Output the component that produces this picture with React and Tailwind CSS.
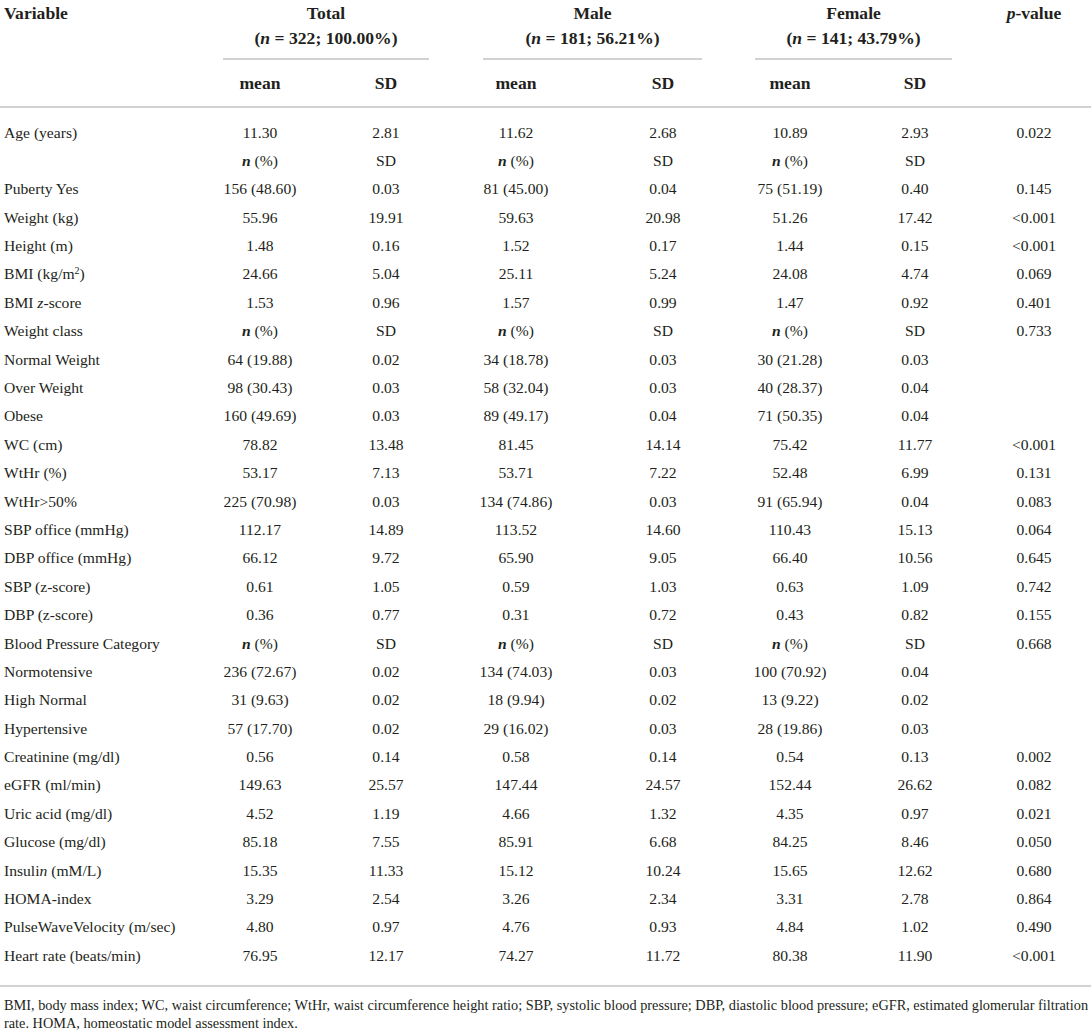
const serif = { fontFamily: '"Liberation Serif", "Times New Roman", serif' };

const cols = 'grid grid-cols-[197px_126px_126px_134px_160px_94px_156px_82px_16px]';

const N = (
  <span>
    <b className="italic">n</b> (%)
  </span>
);

const rows = [
  ['Age (years)', '11.30', '2.81', '11.62', '2.68', '10.89', '2.93', '0.022'],
  ['', N, 'SD', N, 'SD', N, 'SD', ''],
  ['Puberty Yes', '156 (48.60)', '0.03', '81 (45.00)', '0.04', '75 (51.19)', '0.40', '0.145'],
  ['Weight (kg)', '55.96', '19.91', '59.63', '20.98', '51.26', '17.42', '<0.001'],
  ['Height (m)', '1.48', '0.16', '1.52', '0.17', '1.44', '0.15', '<0.001'],
  [<span>BMI (kg/m<sup className="text-[10px]">2</sup>)</span>, '24.66', '5.04', '25.11', '5.24', '24.08', '4.74', '0.069'],
  [<span>BMI <i>z</i>-score</span>, '1.53', '0.96', '1.57', '0.99', '1.47', '0.92', '0.401'],
  ['Weight class', N, 'SD', N, 'SD', N, 'SD', '0.733'],
  ['Normal Weight', '64 (19.88)', '0.02', '34 (18.78)', '0.03', '30 (21.28)', '0.03', ''],
  ['Over Weight', '98 (30.43)', '0.03', '58 (32.04)', '0.03', '40 (28.37)', '0.04', ''],
  ['Obese', '160 (49.69)', '0.03', '89 (49.17)', '0.04', '71 (50.35)', '0.04', ''],
  ['WC (cm)', '78.82', '13.48', '81.45', '14.14', '75.42', '11.77', '<0.001'],
  ['WtHr (%)', '53.17', '7.13', '53.71', '7.22', '52.48', '6.99', '0.131'],
  ['WtHr>50%', '225 (70.98)', '0.03', '134 (74.86)', '0.03', '91 (65.94)', '0.04', '0.083'],
  ['SBP office (mmHg)', '112.17', '14.89', '113.52', '14.60', '110.43', '15.13', '0.064'],
  ['DBP office (mmHg)', '66.12', '9.72', '65.90', '9.05', '66.40', '10.56', '0.645'],
  ['SBP (z-score)', '0.61', '1.05', '0.59', '1.03', '0.63', '1.09', '0.742'],
  ['DBP (z-score)', '0.36', '0.77', '0.31', '0.72', '0.43', '0.82', '0.155'],
  ['Blood Pressure Category', N, 'SD', N, 'SD', N, 'SD', '0.668'],
  ['Normotensive', '236 (72.67)', '0.02', '134 (74.03)', '0.03', '100 (70.92)', '0.04', ''],
  ['High Normal', '31 (9.63)', '0.02', '18 (9.94)', '0.02', '13 (9.22)', '0.02', ''],
  ['Hypertensive', '57 (17.70)', '0.02', '29 (16.02)', '0.03', '28 (19.86)', '0.03', ''],
  ['Creatinine (mg/dl)', '0.56', '0.14', '0.58', '0.14', '0.54', '0.13', '0.002'],
  ['eGFR (ml/min)', '149.63', '25.57', '147.44', '24.57', '152.44', '26.62', '0.082'],
  ['Uric acid (mg/dl)', '4.52', '1.19', '4.66', '1.32', '4.35', '0.97', '0.021'],
  ['Glucose (mg/dl)', '85.18', '7.55', '85.91', '6.68', '84.25', '8.46', '0.050'],
  [<span>Insuli<i>n</i> (mM/L)</span>, '15.35', '11.33', '15.12', '10.24', '15.65', '12.62', '0.680'],
  ['HOMA-index', '3.29', '2.54', '3.26', '2.34', '3.31', '2.78', '0.864'],
  ['PulseWaveVelocity (m/sec)', '4.80', '0.97', '4.76', '0.93', '4.84', '1.02', '0.490'],
  ['Heart rate (beats/min)', '76.95', '12.17', '74.27', '11.72', '80.38', '11.90', '<0.001'],
];

const groups = [
  { name: 'Total', n: '322', pct: '100.00%', box: 'ml-[26px] mr-[20px]' },
  { name: 'Male', n: '181', pct: '56.21%', box: 'ml-[34px] mr-[41px]' },
  { name: 'Female', n: '141', pct: '43.79%', box: 'ml-[12px] mr-[41px]' },
];

function Rule() {
  return <div className="h-[2px] bg-[#d2d2d2]" />;
}

export default function App() {
  return (
    <div className="w-[1091px] h-[1034px] bg-white text-[#231f20] overflow-hidden" style={serif}>
      {/* header */}
      <div className={`${cols} text-[17.6px] font-bold`}>
        <div className="pl-[4px] leading-[26px]">Variable</div>
        {groups.map((g) => (
          <div key={g.name} className="col-span-2">
            <div className={`${g.box} flex flex-col items-center`}>
              <div className="leading-[26px]">{g.name}</div>
              <div className="leading-[24px] whitespace-nowrap">
                (<i>n</i> = {g.n}; {g.pct})
              </div>
              <div className="mt-[8px] w-full h-[2px] bg-[#d2d2d2]" />
            </div>
          </div>
        ))}
        <div className="text-center leading-[26px]">
          <i>p</i>-value
        </div>
        <div />
      </div>
      <div className={`${cols} text-[17.6px] font-bold h-[46px] items-center`}>
        <div />
        <div className="text-center">mean</div>
        <div className="text-center">SD</div>
        <div className="text-center">mean</div>
        <div className="text-center">SD</div>
        <div className="text-center">mean</div>
        <div className="text-center">SD</div>
        <div />
        <div />
      </div>
      <Rule />

      {/* body */}
      <div className="pt-[10px] text-[15.6px]">
        {rows.map((r, i) => (
          <div key={i} className={`${cols} h-[28.4px] items-center`}>
            <div className="pl-[4px] whitespace-nowrap">{r[0]}</div>
            {r.slice(1).map((c, j) => (
              <div key={j} className="text-center whitespace-nowrap">
                {c}
              </div>
            ))}
            <div />
          </div>
        ))}
      </div>

      <div className="mt-[15px]">
        <Rule />
      </div>
      <div className="pl-[4px] pt-[9px] text-[14.3px] leading-[18px] whitespace-nowrap">
        BMI, body mass index; WC, waist circumference; WtHr, waist circumference height ratio; SBP, systolic blood
        pressure; DBP, diastolic blood pressure; eGFR, estimated glomerular filtration
        <br />
        rate. HOMA, homeostatic model assessment index.
      </div>
    </div>
  );
}
